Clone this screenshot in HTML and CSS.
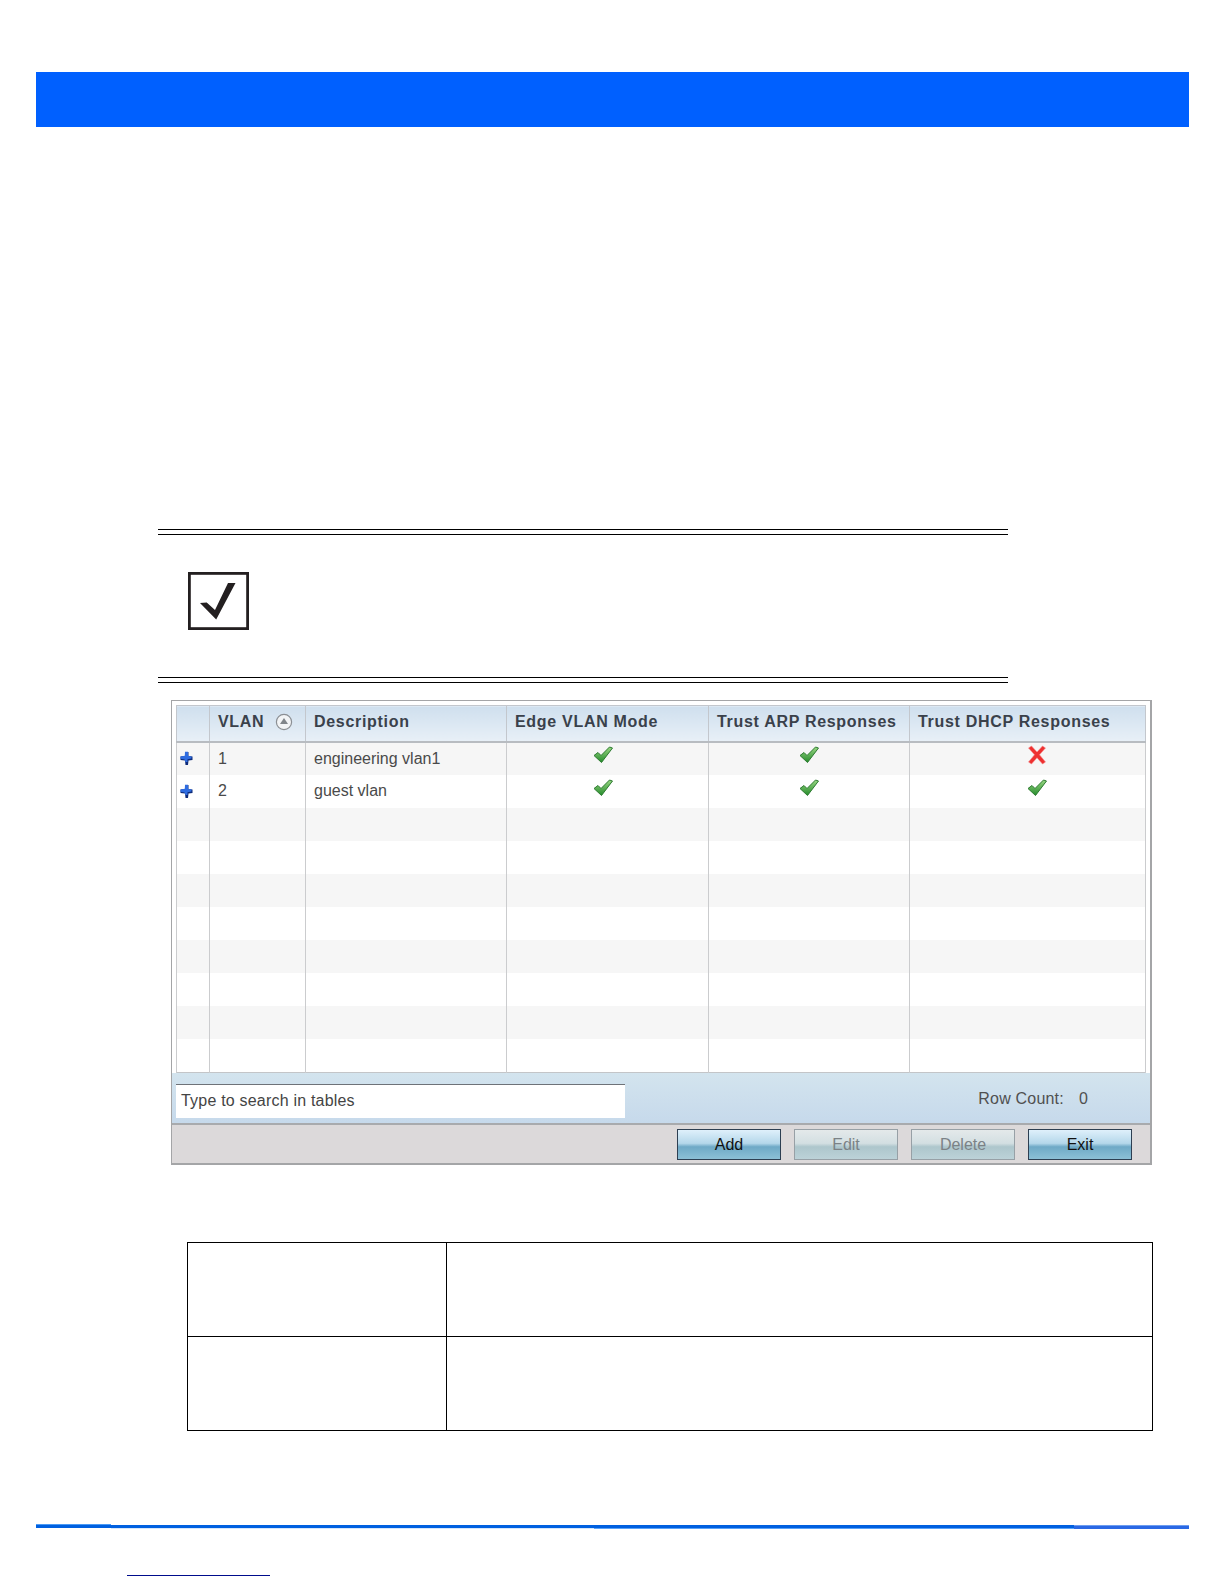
FILE: index.html
```html
<!DOCTYPE html>
<html lang="en">
<head>
<meta charset="utf-8">
<title>VLAN table</title>
<link rel="stylesheet" href="styles.css">
</head>
<body>
<svg class="sprites" width="0" height="0" aria-hidden="true">
  <defs>
    <linearGradient id="checkFill" x1="0" y1="0" x2="0" y2="1">
      <stop offset="0" stop-color="#9ad883"/>
      <stop offset="1" stop-color="#248a2b"/>
    </linearGradient>
    <symbol id="check" viewBox="0 0 20 18">
      <path d="M1 9.5 L5 6.5 L8 9.5 L16.5 1 L19.5 2 L8.5 16.5 Z" fill="url(#checkFill)" stroke="#2c7a30" stroke-width="1" stroke-linejoin="round"/>
    </symbol>
    <symbol id="cross" viewBox="0 0 20 20">
      <path d="M1.5 3 L4.5 1 L10 7 L15.5 1 L18.5 3 L12.5 9.8 L18.5 17 L15.5 19 L10 12.8 L4.5 19 L1.5 17 L7.5 9.8 Z" fill="#ee3030" stroke="#f58a8a" stroke-width=".6"/>
    </symbol>
    <symbol id="plus" viewBox="0 0 13 15">
      <path d="M5 1 H8.5 L8.5 5 L12.5 5.5 L12.5 9 L8.5 9.5 L8 14 H5.5 L5 9.5 L.5 9 L.5 5.5 L5 5 Z" fill="#0d2a78"/>
      <path d="M5 .8 H8 L8 4.8 L11.5 5.6 L11.5 7.6 L7.5 8.2 L7.5 11 H5.4 L4.6 8.4 L.5 7.8 L.5 5.6 L4.8 4.8 Z" fill="#2f6ce0"/>
    </symbol>
  </defs>
</svg>

<header class="banner"></header>

<section class="note">
  <svg class="note-icon" viewBox="0 0 61 58" aria-hidden="true">
    <rect x="1.4" y="1.4" width="58.2" height="55.2" fill="#fff" stroke="#231f20" stroke-width="2.8"/>
    <path d="M12 31 L18.7 30.5 L27 38 L40 11 L47.5 11 L28.2 47.5 Z" fill="#231f20"/>
  </svg>
</section>

<section class="panel">
  <table class="grid">
    <colgroup>
      <col class="c-exp"><col class="c-vlan"><col class="c-desc"><col class="c-edge"><col class="c-arp"><col class="c-dhcp">
    </colgroup>
    <thead>
      <tr>
        <th></th>
        <th><span class="sort-head">VLAN
          <svg class="sort-icon" viewBox="0 0 18 18" aria-hidden="true">
            <circle cx="9" cy="9" r="7.6" fill="#f2f4f6" stroke="#8b8f94" stroke-width="1.2"/>
            <path d="M9 5 L13 11 H5 Z" fill="#80858a"/>
          </svg></span></th>
        <th>Description</th>
        <th>Edge VLAN Mode</th>
        <th>Trust ARP Responses</th>
        <th>Trust DHCP Responses</th>
      </tr>
    </thead>
    <tbody>
      <tr>
        <td class="exp"><svg class="ic-plus"><use href="#plus"/></svg></td>
        <td>1</td><td>engineering vlan1</td>
        <td class="mid shift-edge"><svg class="ic-check"><use href="#check"/></svg></td>
        <td class="mid shift-arp"><svg class="ic-check"><use href="#check"/></svg></td>
        <td class="mid shift-dhcp"><svg class="ic-cross"><use href="#cross"/></svg></td>
      </tr>
      <tr>
        <td class="exp"><svg class="ic-plus"><use href="#plus"/></svg></td>
        <td>2</td><td>guest vlan</td>
        <td class="mid shift-edge"><svg class="ic-check"><use href="#check"/></svg></td>
        <td class="mid shift-arp"><svg class="ic-check"><use href="#check"/></svg></td>
        <td class="mid shift-dhcp"><svg class="ic-check"><use href="#check"/></svg></td>
      </tr>
      <tr><td></td><td></td><td></td><td></td><td></td><td></td></tr>
      <tr><td></td><td></td><td></td><td></td><td></td><td></td></tr>
      <tr><td></td><td></td><td></td><td></td><td></td><td></td></tr>
      <tr><td></td><td></td><td></td><td></td><td></td><td></td></tr>
      <tr><td></td><td></td><td></td><td></td><td></td><td></td></tr>
      <tr><td></td><td></td><td></td><td></td><td></td><td></td></tr>
      <tr><td></td><td></td><td></td><td></td><td></td><td></td></tr>
      <tr><td></td><td></td><td></td><td></td><td></td><td></td></tr>
    </tbody>
  </table>
  <div class="searchbar">
    <div class="search">Type to search in tables</div>
    <div class="count"><span>Row Count:</span><span>0</span></div>
  </div>
  <div class="actions">
    <div class="btn">Add</div>
    <div class="btn off">Edit</div>
    <div class="btn off">Delete</div>
    <div class="btn">Exit</div>
  </div>
</section>

<section class="blank-table">
  <div class="cell"></div><div class="cell"></div>
  <div class="cell"></div><div class="cell"></div>
</section>

<footer class="foot">
  <div class="rule">
    <i class="seg s1"></i><i class="seg s2"></i><i class="seg s3"></i><i class="seg s4"></i>
  </div>
  <div class="foot-link"></div>
</footer>
</body>
</html>
```

FILE: styles.css
```css
* { box-sizing: border-box; }
html, body { margin: 0; padding: 0; background: #fff; }
body { width: 1224px; height: 1584px; overflow: hidden; font-family: "Liberation Sans", Arial, sans-serif; color: #333; }
.sprites { display: block; height: 0; }

.banner { height: 55px; margin: 72px 35px 0 36px; background: #0060ff; }

.note {
  position: relative;
  width: 850px; height: 154px; margin: 402px 0 0 158px;
  border-top: 1px solid #000; border-bottom: 1px solid #000;
  padding: 42px 0 0 30px;
}
.note::before, .note::after {
  content: ""; position: absolute; left: 0; right: 0; height: 1px; background: #000;
}
.note::before { top: 4px; }
.note::after { bottom: 4px; }
.note-icon { display: block; width: 61px; height: 58px; }

.panel {
  width: 981px; height: 465px; margin: 17px 0 0 171px;
  border-style: solid; border-width: 1px 2px 2px 1px; border-color: #a4a5a7; background: #fff;
  padding-top: 4px; display: flex; flex-direction: column;
}
.grid {
  width: 969px; height: 368px; margin-left: 4px;
  border-collapse: collapse; table-layout: fixed; flex: none;
  border: 1px solid #c3c5c8; border-top: 0;
}
.c-exp { width: 33px; } .c-vlan { width: 96px; } .c-desc { width: 201px; }
.c-edge { width: 202px; } .c-arp { width: 201px; } .c-dhcp { width: 236px; }
.grid th {
  height: 36px; padding: 0 0 2px 8px; text-align: left; vertical-align: middle; white-space: nowrap;
  font-size: 16px; font-weight: bold; letter-spacing: .7px; color: #3a414b;
  background: linear-gradient(#cfdfee, #e8f0f7);
  border: 1px solid #c3c7cd; border-bottom: 2px solid #b8bcc1;
}
.sort-head { display: flex; align-items: center; gap: 11px; }
.sort-icon { width: 18px; height: 18px; flex: none; }
.grid td {
  height: 33px; padding: 0 0 0 8px; font-size: 16px; color: #4a4a4a;
  border-left: 1px solid #cbccce; border-right: 1px solid #cbccce;
  white-space: nowrap;
}
.grid tbody tr:nth-child(odd) td { background: #f6f6f6; }
.grid td.exp { padding: 0 0 0 3px; }
.grid td.mid { padding: 0 0 7px; }
.ic-plus { display: block; width: 13px; height: 15px; }
.ic-check { display: block; width: 20px; height: 18px; }
.ic-cross { display: block; width: 20px; height: 20px; }
.shift-edge svg { margin-left: 86px; }
.shift-arp svg { margin-left: 90px; }
.shift-dhcp svg { margin-left: 117px; }

.searchbar {
  height: 52px; flex: none; display: flex; align-items: flex-start; justify-content: space-between;
  background: linear-gradient(#d3e4ee, #c6d9eb); padding: 11px 62px 0 4px; border-bottom: 2px solid #a8aaad;
}
.search {
  width: 449px; height: 34px; background: #fff; border-top: 1px solid #6e7278;
  padding-left: 5px; font-size: 16px; line-height: 32px; letter-spacing: .2px; color: #444;
}
.count { display: flex; gap: 15px; font-size: 16px; line-height: 30px; letter-spacing: .2px; color: #505050; }
.actions {
  flex: 1; background: #dcd9da; display: flex; justify-content: flex-end; gap: 13px;
  padding: 4px 18px 0 0; align-items: flex-start;
}
.btn {
  width: 104px; height: 31px; text-align: center; font-size: 16px; line-height: 29px; color: #111;
  border: 1px solid #2d3f52; background: linear-gradient(#dff0fb 0%, #b4d7ea 46%, #6ea9c6 58%, #8cc0d6 100%);
}
.btn.off { border-color: #97a0a6; color: #7b8286; background: linear-gradient(#e4e9ea 0%, #d3dfe2 46%, #adc6cc 58%, #bcd2d8 100%); }

.blank-table {
  width: 966px; height: 189px; margin: 77px 0 0 187px;
  display: grid; grid-template-columns: 259px 1fr; grid-template-rows: 94px 1fr;
  border: 1px solid #000;
}
.cell { border-right: 1px solid #000; border-bottom: 1px solid #000; }
.cell:nth-child(even) { border-right: 0; }
.cell:nth-child(n+3) { border-bottom: 0; }

.rule { display: flex; align-items: flex-start; width: 1153px; height: 6px; margin: 93px 0 0 36px; }
.seg { display: block; }
.s1 { width: 75px; height: 4px; background: linear-gradient(#4a9af5 25%, #0060e0 25%); }
.s2 { width: 483px; height: 3px; margin-top: 1px; background: #0060e0; box-shadow: 0 1px 0 #d4e6fc; }
.s3 { width: 480px; height: 4px; margin-top: 1px; background: linear-gradient(#0060e0 70%, #5aa2f8 70%); }
.s4 { width: 115px; height: 4px; margin-top: 1px; background: linear-gradient(#6c9cf0 25%, #2a68e4 25%); }
.foot-link { width: 143px; height: 1px; margin: 45px 0 0 127px; background: #000c8c; }
```
